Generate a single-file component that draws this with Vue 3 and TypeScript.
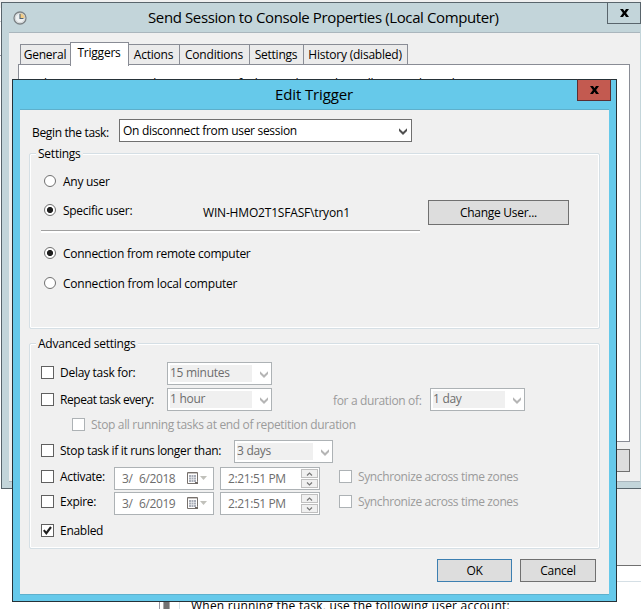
<script setup lang="ts">
import { ref } from 'vue'

interface Tab { id: string; label: string }
interface DateRow { id: string; label: string; date: string; time: string }

const tabs: Tab[] = [
  { id: 'general', label: 'General' },
  { id: 'triggers', label: 'Triggers' },
  { id: 'actions', label: 'Actions' },
  { id: 'conditions', label: 'Conditions' },
  { id: 'settings', label: 'Settings' },
  { id: 'history', label: 'History (disabled)' },
]
const activeTab = ref('triggers')
const userScope = ref<'any' | 'specific'>('specific')
const connection = ref<'remote' | 'local'>('remote')
const enabled = ref(true)
const dateRows: DateRow[] = [
  { id: 'activate', label: 'Activate:', date: '6/2018', time: '2:21:51 PM' },
  { id: 'expire', label: 'Expire:', date: '6/2019', time: '2:21:51 PM' },
]
</script>

<template>
  <main class="desktop">
    <section class="console">
      <div class="console-grey"></div>
      <div class="console-line"></div>
      <div class="console-foot">
        <i class="scroll-edge"></i><i class="scroll-thumb"></i><i class="pane-edge"></i>
        <span class="foot-text">When running the task, use the following user account:</span>
      </div>
    </section>

    <section class="props">
      <header class="props-title">
        <svg class="clock" width="14" height="14" viewBox="0 0 14 14">
          <circle cx="7" cy="7" r="6" fill="#eef1f2" stroke="#7c8285" stroke-width="1.3" />
          <path d="M7 7V2A5 5 0 0 1 12 7Z" fill="#f2cb83" />
          <circle cx="7" cy="7" r="4.7" fill="none" stroke="#c5cacc" stroke-width=".7" />
          <path d="M7 3V7.5H10.5" fill="none" stroke="#526575" stroke-width="1.1" />
        </svg>
        <h1>Send Session to Console Properties (Local Computer)</h1>
        <button class="props-close" aria-label="Close">
          <svg width="9" height="8" viewBox="0 0 9 8"><path d="M0 0H3L4.5 2.3 6 0H9L6.1 4 9 8H6L4.5 5.7 3 8H0L2.9 4Z" /></svg>
        </button>
      </header>
      <div class="props-body">
        <nav class="tabs">
          <button v-for="t in tabs" :key="t.id" :class="['tab', 'tab-' + t.id, { active: activeTab === t.id }]" @click="activeTab = t.id"><span>{{ t.label }}</span></button>
        </nav>
        <div class="page"><p>When you create a task, you can specify the conditions that will trigger the task.</p></div>
        <div class="props-buttons"><button class="btn"></button></div>
      </div>
    </section>

    <section class="dialog">
      <header class="dialog-title">
        <h2>Edit Trigger</h2>
        <button class="dialog-close" aria-label="Close">
          <svg width="9" height="8" viewBox="0 0 9 8"><path d="M0 0H3L4.5 2.3 6 0H9L6.1 4 9 8H6L4.5 5.7 3 8H0L2.9 4Z" /></svg>
        </button>
      </header>
      <div class="dialog-body">
        <div class="begin">
          <span class="begin-label">Begin the task:</span>
          <div class="combo wide"><span>On disconnect from user session</span>
            <svg class="arrow" width="8" height="7" viewBox="0 0 8 7"><path d="M0 .3 4 4 8 .3V3L4 7 0 3Z" /></svg>
          </div>
        </div>

        <section class="group settings-group">
          <h3 class="w-settings">Settings</h3>
          <label class="radio r1" @click="userScope = 'any'"><i :class="{ on: userScope === 'any' }"></i><span>Any user</span></label>
          <div class="user-row">
            <label class="radio" @click="userScope = 'specific'"><i :class="{ on: userScope === 'specific' }"></i><span>Specific user:</span></label>
            <span class="user-name">WIN-HMO2T1SFASF\tryon1</span>
            <button class="btn change">Change User...</button>
          </div>
          <div class="rule"></div>
          <label class="radio r3" @click="connection = 'remote'"><i :class="{ on: connection === 'remote' }"></i><span>Connection from remote computer</span></label>
          <label class="radio r4" @click="connection = 'local'"><i :class="{ on: connection === 'local' }"></i><span>Connection from local computer</span></label>
        </section>

        <section class="group advanced">
          <h3 class="w-advanced">Advanced settings</h3>
          <div class="row delay">
            <label class="check"><i></i><span>Delay task for:</span></label>
            <div class="combo off"><span>15 minutes</span>
              <svg class="arrow" width="8" height="7" viewBox="0 0 8 7"><path d="M0 .3 4 4 8 .3V3L4 7 0 3Z" /></svg>
            </div>
          </div>
          <div class="row repeat">
            <label class="check"><i></i><span>Repeat task every:</span></label>
            <div class="combo off"><span>1 hour</span>
              <svg class="arrow" width="8" height="7" viewBox="0 0 8 7"><path d="M0 .3 4 4 8 .3V3L4 7 0 3Z" /></svg>
            </div>
            <span class="duration">for a duration of:</span>
            <div class="combo off day"><span>1 day</span>
              <svg class="arrow" width="8" height="7" viewBox="0 0 8 7"><path d="M0 .3 4 4 8 .3V3L4 7 0 3Z" /></svg>
            </div>
          </div>
          <div class="row stop-all">
            <label class="check dim"><i></i><span>Stop all running tasks at end of repetition duration</span></label>
          </div>
          <div class="row stop">
            <label class="check"><i></i><span>Stop task if it runs longer than:</span></label>
            <div class="combo off days"><span>3 days</span>
              <svg class="arrow" width="8" height="7" viewBox="0 0 8 7"><path d="M0 .3 4 4 8 .3V3L4 7 0 3Z" /></svg>
            </div>
          </div>
          <div v-for="r in dateRows" :key="r.id" :class="['row', 'date-row', r.id]">
            <label class="check"><i></i><span>{{ r.label }}</span></label>
            <div class="picker">
              <span class="month">3/</span><span class="rest">{{ r.date }}</span>
              <svg class="cal" width="20" height="13" viewBox="0 0 20 13">
                <path d="M.5.5H10.5V9.5L8.5 11.5H.5Z" fill="#fff" stroke="#77716d" />
                <path d="M1 1H10V2H1Z" fill="#c9c5c2" />
                <path d="M2 3H9V10H2Z" fill="#a9adb8" />
                <path d="M2 5.5H9M2 7.5H9M4.5 3V10M6.5 3V10" stroke="#eef0f4" stroke-width=".6" />
                <path d="M8 12V10H11V12Z" fill="#6f6a67" />
                <path d="M13 4H20L16.5 8Z" fill="#c1c1bb" />
              </svg>
            </div>
            <div class="time"><span>{{ r.time }}</span>
              <div class="spin">
                <b><svg width="7" height="4" viewBox="0 0 7 4"><path d="M1 3.5 3.5 1 6 3.5" /></svg></b>
                <b><svg width="7" height="4" viewBox="0 0 7 4"><path d="M1 .5 3.5 3 6 .5" /></svg></b>
              </div>
            </div>
            <label class="check dim sync"><i></i><span>Synchronize across time zones</span></label>
          </div>
          <div class="row enabled">
            <label class="check" @click="enabled = !enabled"><i><svg v-if="enabled" width="11" height="11" viewBox="0 0 11 11"><path d="M1.8 5.2 4.3 8.2 9 2" fill="none" stroke="#1e1e1e" stroke-width="2.1" /></svg></i><span>Enabled</span></label>
          </div>
        </section>

        <footer class="dialog-buttons">
          <button class="btn ok">OK</button>
          <button class="btn cancel">Cancel</button>
        </footer>
      </div>
    </section>
  </main>
</template>

<style>
html, body { margin: 0; overflow: hidden; background: #fff; }
</style>

<style scoped>
* { box-sizing: border-box; }
.desktop { position: relative; width: 641px; height: 609px; overflow: hidden; background: #fff; font: 12px/16px "Open Sans", "Noto Sans", sans-serif; letter-spacing: -.28px; color: #000; }
h1, h2, h3, p { margin: 0; font-weight: 400; }
button { margin: 0; padding: 0; font: inherit; letter-spacing: inherit; color: inherit; border-radius: 0; }
span, h1, h2, h3, p { white-space: nowrap; }
i, b { font-style: normal; font-weight: 400; display: block; flex: none; }
svg { display: block; flex: none; }

.console { display: flex; flex-direction: column; height: 609px; background: linear-gradient(#f0f0f0 0 8px, #fff 8px 21px, #c8ccd0 21px 22px, #fff 22px 55px, #9a9aa5 55px 56px, #fff 56px); }
.console-grey { height: 566px; margin-left: 616px; border-bottom: 1px solid #707070; background: #f0f0f0; }
.console-line { height: 16px; margin-left: 616px; border-bottom: 1px solid #d5dfe5; }
.console-foot { display: flex; height: 27px; padding-left: 159px; overflow: hidden; }
.scroll-edge { width: 1px; background: #9a9aa5; }
.scroll-thumb { width: 7px; margin-left: 3px; background: linear-gradient(90deg, #aaa 0 1px, #727272 1px 6px, #aaa 6px); }
.pane-edge { width: 1px; margin-left: 9px; background: #d5dfe5; }
.foot-text { margin: 16px 0 0 11px; letter-spacing: .22px; }

.props { position: absolute; left: 1px; top: 2px; width: 646px; height: 487px; border: 1px solid #59656c; background: #c3d5da; }
.props-title { display: flex; height: 29px; align-items: flex-start; }
.clock { margin: 8px 0 0 11px; }
h1 { margin: 4px 0 0 121px; width: 352px; font-size: 15px; line-height: 20px; letter-spacing: -.38px; }
.props-close { display: flex; align-items: center; justify-content: center; width: 34px; height: 22px; margin: -1px 0 0 107px; border: 1px solid #59656c; background: #c3d5da; }
.props-body { width: 631px; height: 450px; margin-left: 7px; padding: 9px 9px 0; border-top: 1px solid #aab6bd; border-bottom: 1px solid #aab6bd; background: #f0f0f0; }
.tabs { display: flex; align-items: flex-end; height: 24px; padding-left: 2px; margin-bottom: -2px; position: relative; }
.tab { height: 21px; margin: 0 -1px 1px 0; padding-right: 1px; border: 1px solid #898c95; background: #ebebeb; display: flex; justify-content: center; align-items: center; flex: none; letter-spacing: -.22px; }
.tab.active { height: 24px; margin-bottom: 0; border-bottom: 0; background: #fff; padding-bottom: 3px; z-index: 1; }
.tab-general { width: 51px; } .tab-triggers { width: 59px; } .tab-actions { width: 52px; }
.tab-conditions { width: 71px; } .tab-settings { width: 55px; } .tab-history { width: 105px; }
.page { height: 378px; width: 612px; border: 1px solid #898c95; background: #fff; padding: 11px 14px; }
.page p { letter-spacing: -.18px; }
.props-buttons { display: flex; justify-content: flex-end; padding: 7px 1px 0 0; }
.props-buttons .btn { width: 75px; height: 23px; }

.btn { display: flex; align-items: center; justify-content: center; border: 1px solid #707070; background: #ddd; flex: none; }

.dialog { position: absolute; left: 12px; top: 79px; width: 605px; height: 523px; border: 1px solid #263238; background: #66c9ea; }
.dialog-title { display: flex; height: 29px; padding-left: 262px; }
h2 { width: 79px; margin-top: 4px; font-size: 15px; line-height: 20px; letter-spacing: -.12px; }
.dialog-close { display: flex; align-items: center; justify-content: center; width: 34px; height: 22px; margin: -1px 0 0 223px; border: 1px solid #5a2e32; border-top-color: #263238; background: #c35a50; }
.dialog-body { width: 589px; height: 486px; margin-left: 7px; padding: 9px 9px 0; border-top: 1px solid #5eb0cc; border-bottom: 1px solid #5eb0cc; background: #f0f0f0; }
.begin { display: flex; height: 23px; padding-left: 3px; letter-spacing: -.35px; }
.begin-label { width: 87px; margin-top: 6px; }
.combo { display: flex; align-items: center; justify-content: space-between; width: 105px; height: 23px; padding: 0 3px; border: 1px solid #707070; background: #fff; flex: none; }
.combo .arrow { fill: #505050; margin-top: 1px; }
.combo.wide { width: 293px; padding-right: 4px; letter-spacing: -.3px; }
.combo.off { border-color: #adb2b5; color: #6d6d6d; padding: 0 3px 0 2px; }
.combo.off span { width: 82px; height: 17px; line-height: 16px; background: #f0f0f0; }
.combo.off .arrow { fill: #b5b5b5; }
.combo.day { width: 95px; } .combo.day span { width: 72px; }
.combo.days { width: 99px; } .combo.days span { width: 76px; }

.group { width: 571px; border: 1px solid #d5dfe5; border-radius: 2px; box-shadow: inset 0 0 0 1px #fff; }
.group h3 { height: 16px; line-height: 18px; margin: -9px 0 0 6px; padding-left: 2px; background: #f0f0f0; font-size: 12px; letter-spacing: -.24px; }
.w-settings { width: 47px; } .w-advanced { width: 102px; }
.settings-group { height: 176px; margin-top: 11px; }
.advanced { height: 206px; margin-top: 14px; }
.radio { display: flex; align-items: center; height: 16px; }
.radio i { width: 12px; height: 12px; border: 1px solid #707070; border-radius: 50%; background: #fff; }
.radio i.on { background: radial-gradient(circle, #1e1e1e 0 2.7px, #fff 3.4px); }
.radio span { margin: 1px 0 -1px 7px; }
.r1 { margin: 12px 0 0 14px; }
.user-row { display: flex; height: 25px; margin: 11px 0 0 14px; }
.user-row .radio { width: 159px; margin-top: 2px; }
.user-name { width: 225px; margin-top: 5px; letter-spacing: -.18px; }
.change { width: 141px; height: 25px; }
.rule { width: 379px; height: 3px; margin: 5px 0 0 11px; border-top: 1px solid #a0a0a0; border-bottom: 2px solid #fff; }
.r3 { margin: 12px 0 0 14px; }
.r4 { margin: 14px 0 0 14px; letter-spacing: -.22px; }

.row { display: flex; height: 23px; padding-left: 11px; }
.check { display: flex; align-items: center; height: 13px; margin-top: 4px; flex: none; }
.check i { width: 13px; height: 13px; border: 1px solid #606060; background: #fff; }
.check span { margin-left: 6px; }
.dim { color: #9b9b9b; letter-spacing: -.34px; }
.dim i { border-color: #adb2b5; }
.delay { margin-top: 11px; }
.delay .check, .repeat .check:first-child { width: 126px; }
.repeat { margin-top: 3px; }
.repeat .check, .stop-all .check, .enabled .check { margin-top: 5px; }
.repeat .check { letter-spacing: -.45px; }
.duration { width: 97px; margin: 5px 0 0 61px; color: #9b9b9b; letter-spacing: -.35px; }
.stop-all { margin-top: 2px; padding-left: 42px; }
.stop { margin-top: 4px; }
.stop .check { width: 193px; letter-spacing: -.31px; }
.date-row .check { width: 73px; margin-top: 3px; }
.activate { margin-top: 4px; }
.expire { margin-top: 2px; }
.picker, .time { display: flex; align-items: center; width: 100px; height: 23px; border: 1px solid #adb2b5; background: #fff; color: #6d6d6d; letter-spacing: -.4px; flex: none; }
.picker { padding-left: 7px; }
.month { width: 17px; }
.rest { width: 48px; }
.cal { margin-top: -1px; }
.time { margin-left: 6px; padding: 1px 1px 1px 7px; justify-content: space-between; }
.spin { display: flex; flex-direction: column; gap: 1px; }
.spin b { display: flex; align-items: center; justify-content: center; width: 17px; height: 9px; border: 1px solid #bfbfbf; background: #f0f0f0; }
.spin path { fill: none; stroke: #777; stroke-width: 1.2; }
.date-row .sync { width: auto; margin-left: 19px; letter-spacing: -.38px; }
.enabled { margin-top: 4px; }

.dialog-buttons { display: flex; gap: 8px; padding: 10px 0 0 408px; }
.ok { width: 75px; height: 23px; border-color: #3c7fb1; }
.cancel { width: 76px; height: 23px; }
</style>
